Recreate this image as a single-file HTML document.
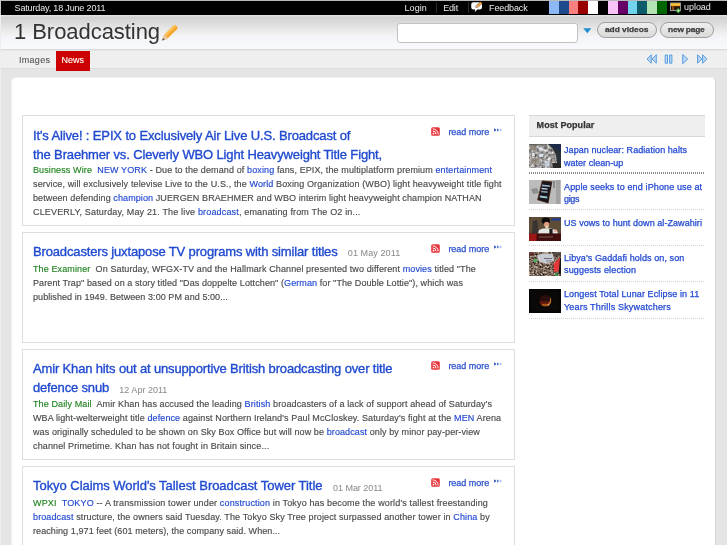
<!DOCTYPE html>
<html>
<head>
<meta charset="utf-8">
<title>1 Broadcasting</title>
<style>
*{box-sizing:border-box;margin:0;padding:0}
html,body{width:727px;height:545px;overflow:hidden}
body{background:#e5e5e5;font-family:"Liberation Sans",Arial,sans-serif;color:#333;position:relative}
a{text-decoration:none;color:#2148d2}
.l{position:absolute;white-space:nowrap;line-height:0;height:0;margin-top:-0.3465em;font-size:9px;color:#444;-webkit-text-stroke:0.25px}
.tb{color:#ececec;font-size:9px;-webkit-text-stroke:0}
.ttl{font-size:22px;color:#333;-webkit-text-stroke:0}
.tab{color:#555;-webkit-text-stroke:0.1px}
.w{color:#fff}
.bt{font-size:7.6px;font-weight:bold;color:#3c3c3c;transform:scaleX(1.1);transform-origin:0 0}
.h{font-size:13px;color:#1f4ad0;-webkit-text-stroke:0.35px #1f4ad0}
.d{font-size:9px;color:#8c8c8c;-webkit-text-stroke:0.05px}
.p{color:#4a4a4a;-webkit-text-stroke:0.15px}
.src{color:#218421}
.rm{color:#2c52cc}
.mp{font-weight:bold;color:#333}
.s{color:#2148d2}
#topbar{position:absolute;left:0;top:0;width:727px;height:14.7px;background:#000;border-top:1px solid #b8b8b8;border-left:1px solid #c8c8c8}
.sep{position:absolute;top:2px;width:1px;height:11px;background:#2a2a2a}
#swatches{position:absolute;left:549px;top:1.4px;height:12.7px;width:118px;display:flex}
#swatches i{display:block;flex:1;height:12.7px}
#header{position:absolute;left:0;top:14.7px;width:727px;height:35.3px;background:linear-gradient(#e2e2e2,#e0e0e0 3%,#d0d0d0 6%,#d6d6d6 15%,#e3e3e3 35%,#eeeeee 52%,#f4f5f8 65%,#f8f9fd);border-bottom:1px solid #dadada}
#search{position:absolute;left:397px;top:23px;width:181px;height:19.5px;background:#fff;border:1px solid #c2c2c2;border-radius:3px}
.btn{position:absolute;top:22px;height:16px;border:1px solid #a0a0a0;border-radius:8px;background:linear-gradient(#efefef,#dadada)}
#tabs{position:absolute;left:0;top:50.5px;width:727px;height:18px;background:#efefef;border-bottom:1px solid #dcdcdc}
#newstab{position:absolute;left:56.3px;top:50.5px;width:33.8px;height:20px;background:#cc0000}
#main{position:absolute;left:10.6px;top:76.6px;width:705.8px;height:480px;background:#fff;border-radius:5px;border-right:1px solid #d6d6d6;border-left:1px solid #f0f0f0;border-top:1px solid #f0f0f0}
#lb{position:absolute;left:0;top:15px;width:1px;height:530px;background:#eeeeee}
.art{position:absolute;left:22px;width:493px;height:111px;border:1px solid #dedede;background:#fff}
#mph{position:absolute;left:529px;top:115px;width:176px;height:21.5px;background:#efefef;border-top:1px solid #d8d8d8;border-bottom:1px solid #d8d8d8}
.dot{position:absolute;left:529px;width:176px;height:1px;background:repeating-linear-gradient(90deg,#d2d2d2 0,#d2d2d2 1px,transparent 1px,transparent 2px)}
.dot.k{height:2px;background:repeating-linear-gradient(90deg,#8c8c8c 0,#8c8c8c 1px,transparent 1px,transparent 2px)}
.im{position:absolute;left:529px;width:32px;height:24px;overflow:hidden}
.rss{position:absolute;left:431px;width:9px;height:9px;border-radius:2px;background:#e8343c}
</style>
</head>
<body>
<div id="topbar"></div>
<i class="sep" style="left:436px"></i><i class="sep" style="left:468px"></i>
<div id="swatches"><i style="background:#8cb8f4"></i><i style="background:#1c4a8c"></i><i style="background:#f88080"></i><i style="background:#990000"></i><i style="background:#ffffff"></i><i style="background:#000000"></i><i style="background:#f8c4f8"></i><i style="background:#660066"></i><i style="background:#70d4ec"></i><i style="background:#0c5c6c"></i><i style="background:#b4e4b4"></i><i style="background:#006600"></i></div>
<div id="header"></div>
<div id="search"></div>
<div class="btn" style="left:597px;width:59.5px"></div>
<div class="btn" style="left:660px;width:53.5px"></div>
<div id="tabs"></div>
<div id="newstab"></div>
<div id="main"></div>
<div id="lb"></div>
<div class="art" style="top:115px"></div>
<div class="art" style="top:232px"></div>
<div class="art" style="top:349px"></div>
<div class="art" style="top:466px"></div>
<svg style="position:absolute;left:431px;top:127.0px" width="9" height="9" viewBox="0 0 9 9"><rect x="0.200" y="0.200" width="8.600" height="8.600" rx="1.600" fill="#e8343c"/><circle cx="2.500" cy="6.600" r="0.900" fill="#fff"/><path d="M1.700 4 A3.400 3.400 0 0 1 5.100 7.400 M1.700 1.900 A5.500 5.500 0 0 1 7.200 7.400" fill="none" stroke="#fff" stroke-width="1"/></svg><svg style="position:absolute;left:494px;top:128.1px" width="9" height="4" viewBox="0 0 9 4"><path d="M0.200 0.300 L2.400 2 L0.200 3.700Z" fill="#1c3ca8"/><path d="M3 0.300 L5.200 2 L3 3.700Z" fill="#4c78d8"/><path d="M5.800 0.300 L8 2 L5.800 3.700Z" fill="#a4c0f0"/></svg>
<svg style="position:absolute;left:431px;top:244.0px" width="9" height="9" viewBox="0 0 9 9"><rect x="0.200" y="0.200" width="8.600" height="8.600" rx="1.600" fill="#e8343c"/><circle cx="2.500" cy="6.600" r="0.900" fill="#fff"/><path d="M1.700 4 A3.400 3.400 0 0 1 5.100 7.400 M1.700 1.900 A5.500 5.500 0 0 1 7.200 7.400" fill="none" stroke="#fff" stroke-width="1"/></svg><svg style="position:absolute;left:494px;top:245.1px" width="9" height="4" viewBox="0 0 9 4"><path d="M0.200 0.300 L2.400 2 L0.200 3.700Z" fill="#1c3ca8"/><path d="M3 0.300 L5.200 2 L3 3.700Z" fill="#4c78d8"/><path d="M5.800 0.300 L8 2 L5.800 3.700Z" fill="#a4c0f0"/></svg>
<svg style="position:absolute;left:431px;top:361.0px" width="9" height="9" viewBox="0 0 9 9"><rect x="0.200" y="0.200" width="8.600" height="8.600" rx="1.600" fill="#e8343c"/><circle cx="2.500" cy="6.600" r="0.900" fill="#fff"/><path d="M1.700 4 A3.400 3.400 0 0 1 5.100 7.400 M1.700 1.900 A5.500 5.500 0 0 1 7.200 7.400" fill="none" stroke="#fff" stroke-width="1"/></svg><svg style="position:absolute;left:494px;top:362.1px" width="9" height="4" viewBox="0 0 9 4"><path d="M0.200 0.300 L2.400 2 L0.200 3.700Z" fill="#1c3ca8"/><path d="M3 0.300 L5.200 2 L3 3.700Z" fill="#4c78d8"/><path d="M5.800 0.300 L8 2 L5.800 3.700Z" fill="#a4c0f0"/></svg>
<svg style="position:absolute;left:431px;top:478.0px" width="9" height="9" viewBox="0 0 9 9"><rect x="0.200" y="0.200" width="8.600" height="8.600" rx="1.600" fill="#e8343c"/><circle cx="2.500" cy="6.600" r="0.900" fill="#fff"/><path d="M1.700 4 A3.400 3.400 0 0 1 5.100 7.400 M1.700 1.900 A5.500 5.500 0 0 1 7.200 7.400" fill="none" stroke="#fff" stroke-width="1"/></svg><svg style="position:absolute;left:494px;top:479.1px" width="9" height="4" viewBox="0 0 9 4"><path d="M0.200 0.300 L2.400 2 L0.200 3.700Z" fill="#1c3ca8"/><path d="M3 0.300 L5.200 2 L3 3.700Z" fill="#4c78d8"/><path d="M5.800 0.300 L8 2 L5.800 3.700Z" fill="#a4c0f0"/></svg>
<div id="mph"></div>
<svg class="im" style="top:144px" viewBox="0 0 32 24"><defs><filter id="nz" color-interpolation-filters="sRGB" x="0" y="0" width="100%" height="100%"><feTurbulence type="fractalNoise" baseFrequency="0.38" numOctaves="3" seed="11"/><feColorMatrix type="matrix" values="0.9 0 0 0 0.17  0.9 0 0 0 0.165  0.9 0 0 0 0.16  0 0 0 0 1"/></filter><filter id="b1"><feGaussianBlur stdDeviation="0.55"/></filter></defs>
<rect width="32" height="24" fill="#9c9a98" filter="url(#nz)"/><g filter="url(#b1)"><polygon points="19,0 32,0 32,24 25.500,24 28,19 27,11 23.500,4.500" fill="#2c3038"/><polygon points="20,0 32,0 32,8 27,5.500" fill="#1c2c48"/><rect x="10" y="3.500" width="4" height="3" fill="#eef2ff" opacity="0.75"/><rect x="3" y="9" width="3" height="3" fill="#ececec" opacity="0.75"/><rect x="10" y="10" width="4" height="3" fill="#e4ecf8" opacity="0.75"/><rect x="14.500" y="5.500" width="4.500" height="1.800" fill="#e8e8e8" opacity="0.75"/><rect x="19" y="13.500" width="2.500" height="3" fill="#f4f4f4" opacity="0.75"/><rect x="15.500" y="17" width="5" height="5.500" fill="#d0dcec" opacity="0.75"/><rect x="1" y="2" width="6" height="4" fill="#8c7c70" opacity="0.8"/><rect x="2" y="14" width="8" height="6" fill="#94887c" opacity="0.7"/><rect x="23.500" y="19" width="8.500" height="5" fill="#2c2c2c"/><rect x="0" y="0" width="18" height="1.500" fill="#5c5854" opacity="0.8"/></g></svg>
<svg class="im" style="top:180px" viewBox="0 0 32 24"><defs><filter id="b2"><feGaussianBlur stdDeviation="0.6"/></filter></defs>
<rect width="32" height="24" fill="#bcbcbc"/><g filter="url(#b2)"><rect x="27" y="0" width="4" height="24" fill="#a2a2a2"/><polygon points="2,9 8,8 10,13 4,14" fill="#8e8e8e"/><rect x="24" y="1" width="2" height="7" fill="#8a8a8a"/><polygon points="13,0.6 23.4,1.6 19.4,23.6 8.2,20" fill="#4a2418"/><polygon points="13.8,1.6 22.4,2.4 18.8,22.4 9.4,19.4" fill="#14181c"/><rect x="13" y="5" width="8" height="1.6" fill="#9fb4c8" transform="rotate(6 17 6)"/><rect x="12.6" y="8" width="6" height="1.5" fill="#c8d4e4" transform="rotate(6 15 9)"/><rect x="12" y="11" width="6.5" height="1.6" fill="#8a98a8" transform="rotate(6 15 12)"/><rect x="10.8" y="16" width="7.5" height="2" fill="#9cc0cc" transform="rotate(8 14 17)"/></g></svg>
<svg class="im" style="top:217px" viewBox="0 0 32 24"><defs><filter id="b3"><feGaussianBlur stdDeviation="0.55"/></filter></defs>
<rect width="32" height="24" fill="#5c4c38"/><g filter="url(#b3)"><polygon points="4,4 8,3 9,10 10,16 3,16" fill="#3a3232"/><rect x="22.500" y="1.4" width="9" height="2.2" fill="#1c3c90"/><ellipse cx="16.8" cy="3.8" rx="4.2" ry="3.2" fill="#0c0c0c"/><ellipse cx="17.6" cy="7.4" rx="2.6" ry="2.6" fill="#dc9a7c"/><rect x="16.4" y="8.6" width="3" height="3" fill="#e4d4b0"/><polygon points="9,16.5 10,13 14,11.4 22,11.6 28,13.6 29,16.5" fill="#e6e6e6"/><rect x="20.400" y="12" width="3.2" height="5" fill="#1a1a1a"/><rect x="25" y="12.6" width="3" height="2.4" fill="#e8b0a8"/><rect x="0" y="16.6" width="32" height="7.4" fill="#420a0a"/><rect x="0" y="17" width="7.500" height="7" fill="#9c1616"/><rect x="10" y="19" width="14" height="2" fill="#5a3030"/></g></svg>
<svg class="im" style="top:252px" viewBox="0 0 32 24"><defs><filter id="nz4" color-interpolation-filters="sRGB" x="0" y="0" width="100%" height="100%"><feTurbulence type="fractalNoise" baseFrequency="0.55" numOctaves="3" seed="5"/><feColorMatrix type="matrix" values="1.3 0 0 0 -0.16  1.2 0 0 0 -0.18  1.1 0 0 0 -0.18  0 0 0 0 1"/></filter><filter id="b4"><feGaussianBlur stdDeviation="0.6"/></filter></defs>
<rect width="32" height="24" fill="#84705c" filter="url(#nz4)"/><g filter="url(#b4)"><polygon points="8,3.500 15,1.200 24,2 25,9 17,11.500 10,9.500" fill="#c8ccd2"/><rect x="15" y="6" width="8" height="1" fill="#6a6a7c"/><rect x="17" y="8.400" width="6" height="1" fill="#7c7c8c"/><circle cx="6.500" cy="8.500" r="1.700" fill="#48b45c"/><polygon points="24.500,12 31,5.500 32,6 30,19 25,20" fill="#e43838"/><polygon points="31,6 32,6 32,22 29.500,22" fill="#141414"/><polygon points="26,24 27.500,20 29,24" fill="#2ca040"/><rect x="0" y="0" width="5" height="4" fill="#5c2c24" opacity="0.8"/><rect x="24" y="0" width="8" height="4" fill="#4c4440" opacity="0.8"/></g></svg>
<svg class="im" style="top:289px" viewBox="0 0 32 24"><defs><filter id="b5"><feGaussianBlur stdDeviation="0.5"/></filter><clipPath id="mc"><circle cx="16.4" cy="11.8" r="6"/></clipPath></defs>
<rect width="32" height="24" fill="#050505"/><rect x="2" y="1.200" width="28" height="21" fill="#0a0908"/><g filter="url(#b5)"><g clip-path="url(#mc)"><rect x="8" y="4" width="18" height="16" fill="#2c0c08"/><rect x="10" y="12.200" width="14" height="2.800" fill="#5c1810"/><rect x="12.500" y="14.800" width="8" height="2.600" fill="#a85418"/><polygon points="21.200,8 22.600,10 22,14 19.500,17 18.500,16 20.800,12.500" fill="#b8702c"/><circle cx="19.300" cy="15.800" r="0.600" fill="#f4e0c0"/></g></g></svg>
<div class="dot k" style="top:172px"></div>
<div class="dot" style="top:209px"></div>
<div class="dot" style="top:245px"></div>
<div class="dot" style="top:281px"></div>
<div class="dot" style="top:317.500px"></div>
<svg style="position:absolute;left:470px;top:1px" width="14" height="13" viewBox="0 0 14 13"><path d="M3.400 1.200 H9.800 Q12 1.200 12 3.400 V6.200 Q12 8.400 9.800 8.400 H7.200 L4.800 11.200 L5.200 8.400 H3.400 Q1.200 8.400 1.200 6.200 V3.400 Q1.200 1.200 3.400 1.200Z" fill="#fff"/><path d="M5.600 7 L5.400 4.900 L10.400 0.200 L12.800 2.300 L7.600 7Z" fill="#222" opacity="0.55"/><path d="M6 6.700 L6.100 5.200 L10.600 0.900 L12.100 2.300 L7.500 6.500Z" fill="#f6a032"/><path d="M6 6.700 L6.100 5.200 L6.800 4.600 L8.100 5.900 L7.500 6.500Z" fill="#eab49c"/><path d="M6 6.700 L6.050 6 L6.700 6.600Z" fill="#444"/></svg>
<svg style="position:absolute;left:670px;top:2px" width="12" height="12" viewBox="0 0 12 12"><rect x="0.500" y="1" width="10" height="7.600" fill="#2a1a10" stroke="#a8a8a8" stroke-width="0.900"/><rect x="1" y="1.500" width="9" height="2.600" fill="#fcb020"/><rect x="1" y="1.500" width="9" height="1" fill="#fcd860"/><rect x="2.200" y="4.200" width="1.600" height="3.800" fill="#a85810"/><path d="M8.300 6 L11 8.700 L8.300 11.400 L5.600 8.700Z" fill="#3c9c3c"/><path d="M8.300 7.200 V10.200 M6.800 8.700 H9.800" stroke="#b8f0b0" stroke-width="0.900"/></svg>
<svg style="position:absolute;left:161px;top:24px" width="18" height="18" viewBox="0 0 18 18"><path d="M1.200 16.400 L2.600 11.600 L12.800 1.300 Q13.800 0.500 14.800 1.400 L16.300 3 Q17 4 16.200 4.900 L6 15Z" fill="#f6a52a"/><path d="M3.600 10.600 L12.800 1.300 Q13.800 0.500 14.800 1.400 L15.300 2 L5 12.200Z" fill="#fbc35a"/><path d="M1.200 16.400 L2.600 11.600 L3.600 10.600 L7 14 L6 15Z" fill="#e8c8a4"/><path d="M1.200 16.400 L1.900 14 L3.600 15.700Z" fill="#4a4a4a"/></svg>
<svg style="position:absolute;left:582.500px;top:28px" width="9" height="6" viewBox="0 0 9 6"><path d="M0.300 0.300 H8.300 L4.300 5.200Z" fill="#1f8ed4"/></svg>
<svg style="position:absolute;left:645px;top:53px" width="64" height="12" viewBox="0 0 64 12"><g fill="#bcd8f6" stroke="#5a9ee2" stroke-width="1" stroke-linejoin="round"><path d="M6.300 1.800 V10.200 L2 6Z"/><path d="M11.300 1.800 V10.200 L7 6Z"/><rect x="20.200" y="2" width="2.300" height="8.200"/><rect x="24.600" y="2" width="2.300" height="8.200"/><path d="M37.700 1.500 V10.700 L42.800 6.100Z"/><path d="M52.600 1.800 V10.200 L56.900 6Z"/><path d="M57.600 1.800 V10.200 L61.900 6Z"/></g></svg>
<div id="txt" style="position:absolute;left:0;top:0;width:727px;height:545px;will-change:transform">
<div id="date" class="l tb" style="left:14.6px;top:10.8px;letter-spacing:-0.163px">Saturday, 18 June 2011</div>
<div id="login" class="l tb" style="left:404.6px;top:10.8px;letter-spacing:0.025px">Login</div>
<div id="edit" class="l tb" style="left:443.2px;top:10.8px;letter-spacing:-0.167px">Edit</div>
<div id="feedback" class="l tb" style="left:489.0px;top:10.8px;letter-spacing:-0.117px">Feedback</div>
<div id="upload" class="l tb" style="left:684.0px;top:10.4px;letter-spacing:-0.040px">upload</div>
<div id="title" class="l ttl" style="left:14.0px;top:39.6px;letter-spacing:-0.053px">1 Broadcasting</div>
<div id="tab1" class="l tab" style="left:19.0px;top:63.4px;letter-spacing:0.280px">Images</div>
<div id="tab2" class="l tab w" style="left:61.4px;top:63.4px;letter-spacing:0.065px">News</div>
<div id="b1" class="l bt" style="left:604.8px;top:32.6px;letter-spacing:-0.024px">add videos</div>
<div id="b2" class="l bt" style="left:667.8px;top:32.6px;letter-spacing:-0.168px">new page</div>
<div id="a1h1" class="l h" style="left:33.0px;top:140.5px;letter-spacing:-0.136px">It's Alive! : EPIX to Exclusively Air Live U.S. Broadcast of</div>
<div id="a1h2" class="l h" style="left:33.0px;top:159.5px;letter-spacing:-0.144px">the Braehmer vs. Cleverly WBO Light Heavyweight Title Fight,</div>
<div id="a1p1" class="l p" style="left:33.0px;top:173.5px;letter-spacing:0.119px"><span class="src">Business Wire</span>&nbsp; <a>NEW YORK</a> - Due to the demand of <a>boxing</a> fans, EPIX, the multiplatform premium <a>entertainment</a></div>
<div id="a1p2" class="l p" style="left:33.0px;top:187.5px;letter-spacing:0.129px">service, will exclusively televise Live to the U.S., the <a>World</a> Boxing Organization (WBO) light heavyweight title fight</div>
<div id="a1p3" class="l p" style="left:33.0px;top:201.5px;letter-spacing:0.098px">between defending <a>champion</a> JUERGEN BRAEHMER and WBO interim light heavyweight champion NATHAN</div>
<div id="a1p4" class="l p" style="left:33.0px;top:215.5px;letter-spacing:0.162px">CLEVERLY, Saturday, May 21. The live <a>broadcast</a>, emanating from The O2 in...</div>
<div id="a2h1" class="l h" style="left:33.0px;top:256.5px;letter-spacing:-0.149px">Broadcasters juxtapose TV programs with similar titles</div>
<div id="a2d" class="l d" style="left:347.8px;top:256.5px;letter-spacing:0.100px">01 May 2011</div>
<div id="a2p1" class="l p" style="left:33.0px;top:272.3px;letter-spacing:0.111px"><span class="src">The Examiner</span>&nbsp; On Saturday, WFGX-TV and the Hallmark Channel presented two different <a>movies</a> titled "The</div>
<div id="a2p2" class="l p" style="left:33.0px;top:286.3px;letter-spacing:0.094px">Parent Trap" based on a story titled "Das doppelte Lottchen" (<a>German</a> for "The Double Lottie"), which was</div>
<div id="a2p3" class="l p" style="left:33.0px;top:300.3px;letter-spacing:0.071px">published in 1949. Between 3:00 PM and 5:00...</div>
<div id="a3h1" class="l h" style="left:33.0px;top:373.5px;letter-spacing:-0.151px">Amir Khan hits out at unsupportive British broadcasting over title</div>
<div id="a3h2" class="l h" style="left:33.0px;top:392.8px;letter-spacing:-0.172px">defence snub</div>
<div id="a3d" class="l d" style="left:119.3px;top:392.8px;letter-spacing:0.020px">12 Apr 2011</div>
<div id="a3p1" class="l p" style="left:33.0px;top:407.2px;letter-spacing:0.119px"><span class="src">The Daily Mail</span>&nbsp; Amir Khan has accused the leading <a>British</a> broadcasters of a lack of support ahead of Saturday's</div>
<div id="a3p2" class="l p" style="left:33.0px;top:421.2px;letter-spacing:0.116px">WBA light-welterweight title <a>defence</a> against Northern Ireland's Paul McCloskey. Saturday's fight at the <a>MEN</a> Arena</div>
<div id="a3p3" class="l p" style="left:33.0px;top:435.2px;letter-spacing:0.101px">was originally scheduled to be shown on Sky Box Office but will now be <a>broadcast</a> only by minor pay-per-view</div>
<div id="a3p4" class="l p" style="left:33.0px;top:449.2px;letter-spacing:0.132px">channel Primetime. Khan has not fought in Britain since...</div>
<div id="a4h1" class="l h" style="left:33.0px;top:490.7px;letter-spacing:-0.041px">Tokyo Claims World's Tallest Broadcast Tower Title</div>
<div id="a4d" class="l d" style="left:333.0px;top:490.7px;letter-spacing:-0.030px">01 Mar 2011</div>
<div id="a4p1" class="l p" style="left:33.0px;top:506.3px;letter-spacing:0.145px"><span class="src">WPXI</span>&nbsp; <a>TOKYO</a> -- A transmission tower under <a>construction</a> in Tokyo has become the world's tallest freestanding</div>
<div id="a4p2" class="l p" style="left:33.0px;top:520.3px;letter-spacing:0.121px"><a>broadcast</a> structure, the owners said Tuesday. The Tokyo Sky Tree project surpassed another tower in <a>China</a> by</div>
<div id="a4p3" class="l p" style="left:33.0px;top:534.3px;letter-spacing:0.086px">reaching 1,971 feet (601 meters), the company said. When...</div>
<div id="rm0" class="l rm" style="left:448.4px;top:134.9px;letter-spacing:-0.033px">read more</div>
<div id="rm1" class="l rm" style="left:448.4px;top:251.9px;letter-spacing:-0.033px">read more</div>
<div id="rm2" class="l rm" style="left:448.4px;top:368.9px;letter-spacing:-0.033px">read more</div>
<div id="rm3" class="l rm" style="left:448.4px;top:485.9px;letter-spacing:-0.033px">read more</div>
<div id="mp" class="l mp" style="left:536.6px;top:128.6px;letter-spacing:0.061px">Most Popular</div>
<div id="s1a" class="l s" style="left:564.0px;top:153.4px;letter-spacing:0.069px">Japan nuclear: Radiation halts</div>
<div id="s1b" class="l s" style="left:564.0px;top:166.0px;letter-spacing:0.024px">water clean-up</div>
<div id="s2a" class="l s" style="left:564.0px;top:189.7px;letter-spacing:0.129px">Apple seeks to end iPhone use at</div>
<div id="s2b" class="l s" style="left:564.0px;top:202.3px;letter-spacing:-0.333px">gigs</div>
<div id="s3a" class="l s" style="left:564.0px;top:226.2px;letter-spacing:0.060px">US vows to hunt down al-Zawahiri</div>
<div id="s4a" class="l s" style="left:564.0px;top:261.0px;letter-spacing:0.089px">Libya's Gaddafi holds on, son</div>
<div id="s4b" class="l s" style="left:564.0px;top:273.6px;letter-spacing:0.156px">suggests election</div>
<div id="s5a" class="l s" style="left:564.0px;top:297.6px;letter-spacing:0.110px">Longest Total Lunar Eclipse in 11</div>
<div id="s5b" class="l s" style="left:564.0px;top:310.2px;letter-spacing:0.177px">Years Thrills Skywatchers</div>
</div>
</body>
</html>
